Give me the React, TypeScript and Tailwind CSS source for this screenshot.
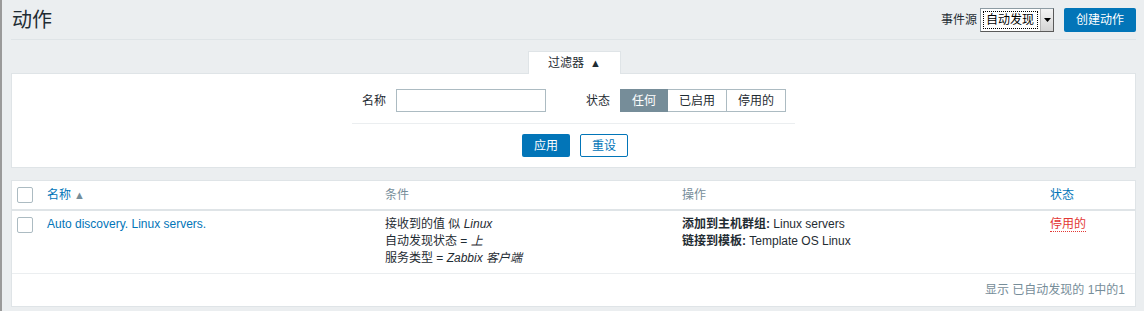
import React from 'react';

const font = { fontFamily: '"Liberation Sans", Arial, "Noto Sans CJK SC", sans-serif' };

function Checkbox() {
  return <span className="block w-4 h-4 bg-white border border-[#acbbc2] rounded-[2px]" />;
}

function HeaderBar() {
  return (
    <div className="flex items-center justify-between h-[40px] border-b border-[#dfe4e7]">
      <h1 className="text-[20px] leading-none text-[#1f2c33] pl-px pt-px">动作</h1>
      <div className="flex items-center">
        <span className="text-[12px] text-[#1f2c33] mr-[3px]">事件源</span>
        <div className="flex h-[24px] w-[74px] bg-white border border-[#8d9ba3] border-r-[#5a5a5a] border-b-[#5a5a5a]">
          <div className="flex-1 flex items-center p-[2px]">
            <span className="flex-1 h-full flex items-center pl-[2px] text-[12px] text-black border border-dotted border-black whitespace-nowrap">
              自动发现
            </span>
          </div>
          <div className="w-[13px] flex items-center justify-center bg-gradient-to-b from-[#f4f4f4] to-[#d4d4d4] border-l border-[#b5b5b5]">
            <svg width="7" height="4" viewBox="0 0 7 4">
              <path d="M0 0h7L3.5 4z" fill="#000" />
            </svg>
          </div>
        </div>
        <button className="ml-[10px] h-[24px] w-[72px] bg-[#0275b8] text-white text-[12px] rounded-[2px]">
          创建动作
        </button>
      </div>
    </div>
  );
}

function Filter() {
  return (
    <div className="mt-[11px]">
      <div className="flex justify-center">
        <div className="relative z-10 -mb-px ml-[2px] h-[23px] w-[93px] bg-white border border-b-0 border-[#dfe4e7] flex items-center justify-center gap-[6px] text-[12px] text-[#1f2c33]">
          <span>过滤器</span>
          <span className="text-[11px] leading-none">▲</span>
        </div>
      </div>
      <div className="bg-white border border-[#dfe4e7] pt-[15px] pb-[10px]">
        <div className="mx-auto w-[443px] flex items-center px-[10px] pb-[11px] border-b border-[#ebeef0] text-[12px] text-[#1f2c33] whitespace-nowrap">
          <span className="w-[24px] shrink-0">名称</span>
          <input className="ml-[10px] w-[150px] h-[23px] shrink-0 border border-[#acbbc2] bg-white outline-none" />
          <span className="ml-[40px] w-[24px] shrink-0">状态</span>
          <div className="ml-[10px] flex h-[23px] shrink-0">
            <span className="w-[48px] flex items-center justify-center bg-[#768d99] text-white border border-[#768d99]">任何</span>
            <span className="w-[58px] flex items-center justify-center border-y border-[#acbbc2]">已启用</span>
            <span className="w-[60px] flex items-center justify-center border border-[#acbbc2]">停用的</span>
          </div>
        </div>
        <div className="mt-[10px] flex justify-center gap-[10px] text-[12px]">
          <button className="w-[48px] h-[23px] bg-[#0275b8] text-white rounded-[2px] ml-[3px]">应用</button>
          <button className="w-[48px] h-[23px] border border-[#0275b8] text-[#0275b8] bg-white rounded-[2px]">重设</button>
        </div>
      </div>
    </div>
  );
}

function ActionsTable() {
  const cols = 'grid grid-cols-[30px_338px_297px_368px_1fr]';
  return (
    <div className="mt-[12px] bg-white border border-[#dfe4e7] text-[12px]">
      <div className={`${cols} h-[30px] items-center border-b-2 border-[#dfe4e7]`}>
        <div className="pl-[5px]"><Checkbox /></div>
        <div className="pl-[5px] text-[#0275b8] flex items-center gap-[3px]">
          <span>名称</span>
          <span className="text-[11px] text-[#768d99] leading-none">▲</span>
        </div>
        <div className="pl-[5px] text-[#768d99]">条件</div>
        <div className="pl-[5px] text-[#768d99]">操作</div>
        <div className="pl-[5px] text-[#0275b8]">状态</div>
      </div>
      <div className={`${cols} pt-[5px] pb-[6px] leading-[17px] border-b border-[#ebeef0] text-[#1f2c33]`}>
        <div className="pl-[5px] pt-px"><Checkbox /></div>
        <div className="pl-[5px] text-[#0275b8]">Auto discovery. Linux servers.</div>
        <div className="pl-[5px]">
          <div>接收到的值 似 <i>Linux</i></div>
          <div>自动发现状态 = <i>上</i></div>
          <div>服务类型 = <i>Zabbix 客户端</i></div>
        </div>
        <div className="pl-[5px]">
          <div><b>添加到主机群组:</b> Linux servers</div>
          <div><b>链接到模板:</b> Template OS Linux</div>
        </div>
        <div className="pl-[5px]">
          <span className="text-[#e33734] border-b border-dotted border-[#e33734]">停用的</span>
        </div>
      </div>
      <div className="h-[32px] flex items-center justify-end pr-[10px] text-[#768d99]">
        显示 已自动发现的 1中的1
      </div>
    </div>
  );
}

export default function App() {
  return (
    <div style={font} className="w-[1144px] h-[311px] bg-[#ebeef0] border-l-2 border-[#9a9a9a] pl-[9px] pr-[8px] overflow-hidden">
      <HeaderBar />
      <Filter />
      <ActionsTable />
    </div>
  );
}
